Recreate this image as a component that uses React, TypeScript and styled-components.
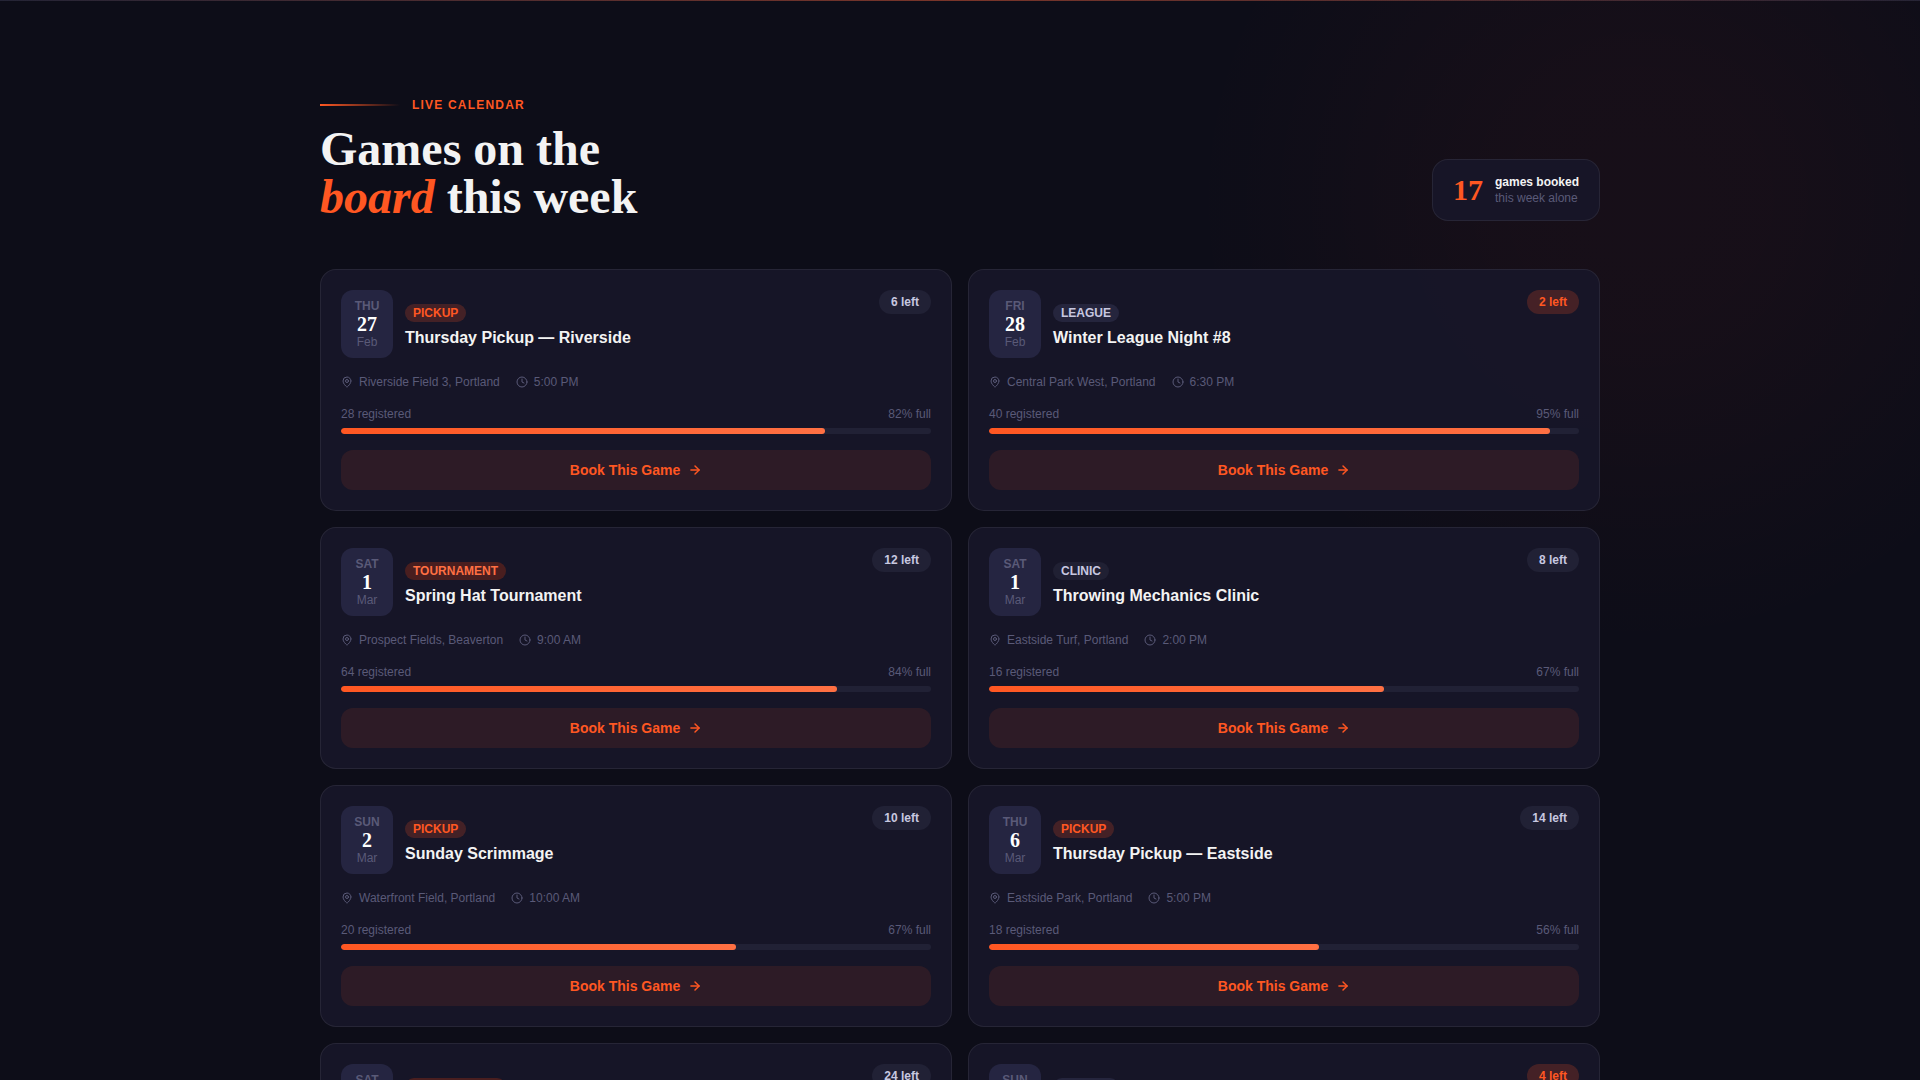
import React from "react";
import styled, { createGlobalStyle } from "styled-components";
import { ArrowRight, Clock, MapPin } from "lucide-react";

type Kind = "Pickup" | "League" | "Tournament" | "Clinic";

interface Game {
  weekday: string;
  day: number;
  month: string;
  kind: Kind;
  title: string;
  place: string;
  time: string;
  registered: number;
  left: number;
}

const games: Game[] = [
  { weekday: "Thu", day: 27, month: "Feb", kind: "Pickup", title: "Thursday Pickup — Riverside", place: "Riverside Field 3, Portland", time: "5:00 PM", registered: 28, left: 6 },
  { weekday: "Fri", day: 28, month: "Feb", kind: "League", title: "Winter League Night #8", place: "Central Park West, Portland", time: "6:30 PM", registered: 40, left: 2 },
  { weekday: "Sat", day: 1, month: "Mar", kind: "Tournament", title: "Spring Hat Tournament", place: "Prospect Fields, Beaverton", time: "9:00 AM", registered: 64, left: 12 },
  { weekday: "Sat", day: 1, month: "Mar", kind: "Clinic", title: "Throwing Mechanics Clinic", place: "Eastside Turf, Portland", time: "2:00 PM", registered: 16, left: 8 },
  { weekday: "Sun", day: 2, month: "Mar", kind: "Pickup", title: "Sunday Scrimmage", place: "Waterfront Field, Portland", time: "10:00 AM", registered: 20, left: 10 },
  { weekday: "Thu", day: 6, month: "Mar", kind: "Pickup", title: "Thursday Pickup — Eastside", place: "Eastside Park, Portland", time: "5:00 PM", registered: 18, left: 14 },
  { weekday: "Sat", day: 8, month: "Mar", kind: "Tournament", title: "Rose City Classic", place: "Delta Park, Portland", time: "9:00 AM", registered: 72, left: 24 },
  { weekday: "Sun", day: 9, month: "Mar", kind: "League", title: "Winter League Night #9", place: "Central Park West, Portland", time: "6:30 PM", registered: 38, left: 4 },
];

const sans = `"Liberation Sans", Arial, sans-serif`;
const serif = `"Liberation Serif", "Times New Roman", serif`;

const color = {
  page: "#0d0d18",
  card: "rgba(23, 22, 41, 0.9)",
  tile: "#252541",
  border: "rgba(255, 255, 255, 0.07)",
  text: "#f3f3f3",
  soft: "#c8c8e0",
  muted: "#5a5a78",
  accent: "#ff5722",
  accentSoft: "#ff7043",
};

const kindStyle: Record<Kind, { fg: string; bg: string }> = {
  Pickup: { fg: "#ff5722", bg: "rgba(255, 87, 34, 0.2)" },
  Tournament: { fg: "#ff7043", bg: "rgba(191, 54, 12, 0.3)" },
  League: { fg: color.soft, bg: "#25253d" },
  Clinic: { fg: color.soft, bg: "#202033" },
};

const GlobalStyle = createGlobalStyle`
  *, *::before, *::after { box-sizing: border-box; }
  body {
    margin: 0;
    background: ${color.page};
    color: ${color.text};
    font: 12px/16px ${sans};
  }
  h1, h2, p, ul { margin: 0; padding: 0; }
`;

const Section = styled.section`
  position: relative;
  overflow: hidden;
  min-height: 100vh;
  padding: 0 32px 96px;
`;

const TopLine = styled.div`
  height: 1px;
  margin: 0 -32px 96px;
  background: linear-gradient(90deg, #242436, #7a3529, #242436);
`;

const Glow = styled.div`
  position: absolute;
  top: -250px;
  right: -170px;
  width: 900px;
  height: 900px;
  border-radius: 50%;
  background: radial-gradient(
    circle closest-side,
    rgba(255, 60, 34, 0.045),
    rgba(255, 60, 34, 0.041) 30%,
    rgba(255, 60, 34, 0.024) 58%,
    rgba(255, 60, 34, 0.006) 84%,
    transparent
  );
  pointer-events: none;
`;

const Container = styled.div`
  position: relative;
  max-width: 1280px;
  margin: 0 auto;
`;

const Header = styled.header`
  display: flex;
  align-items: flex-end;
  justify-content: space-between;
  gap: 24px;
  margin-bottom: 48px;
`;

const Eyebrow = styled.p`
  display: flex;
  align-items: center;
  gap: 12px;
  margin-bottom: 12px;
  color: ${color.accent};
  font-weight: 700;
  letter-spacing: 0.1em;
  text-transform: uppercase;

  &::before {
    content: "";
    width: 80px;
    height: 2px;
    background: linear-gradient(90deg, ${color.accent}, transparent);
  }
`;

const Heading = styled.h1`
  font: 700 48px/48px ${serif};

  em {
    color: ${color.accent};
  }
`;

const Stat = styled.div`
  display: flex;
  align-items: center;
  gap: 12px;
  padding: 12px 20px;
  border: 1px solid ${color.border};
  border-radius: 16px;
  background: ${color.card};
`;

const StatNumber = styled.span`
  color: ${color.accent};
  font: 700 30px/36px ${serif};
`;

const StatText = styled.p`
  display: flex;
  flex-direction: column;
  color: ${color.muted};

  strong {
    color: ${color.text};
  }
`;

const Grid = styled.ul`
  display: grid;
  grid-template-columns: repeat(2, minmax(0, 1fr));
  gap: 16px;
  list-style: none;
`;

const Card = styled.li`
  display: flex;
  flex-direction: column;
  gap: 16px;
  padding: 20px;
  border: 1px solid ${color.border};
  border-radius: 16px;
  background: ${color.card};
`;

const CardTop = styled.div`
  display: flex;
  align-items: flex-start;
  justify-content: space-between;
`;

const Identity = styled.div`
  display: flex;
  align-items: center;
  gap: 12px;
`;

const DateTile = styled.time`
  display: flex;
  flex-direction: column;
  align-items: center;
  justify-content: center;
  width: 52px;
  height: 68px;
  border-radius: 12px;
  background: ${color.tile};
  color: ${color.muted};
`;

const Weekday = styled.span`
  font-weight: 700;
  text-transform: uppercase;
`;

const Day = styled.span`
  color: #ffffff;
  font: 700 20px/20px ${serif};
`;

const Names = styled.div`
  display: flex;
  flex-direction: column;
  align-items: flex-start;
  gap: 4px;
  padding-top: 6px;
`;

const Tag = styled.span<{ $kind: Kind }>`
  padding: 1px 8px;
  border-radius: 9px;
  background: ${({ $kind }) => kindStyle[$kind].bg};
  color: ${({ $kind }) => kindStyle[$kind].fg};
  font-weight: 700;
  text-transform: uppercase;
`;

const Title = styled.h2`
  font: 700 16px/24px ${sans};
`;

const Spots = styled.span<{ $low: boolean }>`
  padding: 4px 12px;
  border-radius: 12px;
  background: ${({ $low }) => ($low ? "rgba(255, 87, 34, 0.2)" : "#212135")};
  color: ${({ $low }) => ($low ? color.accent : color.soft)};
  font-weight: 700;
`;

const Meta = styled.div`
  display: flex;
  gap: 16px;
  color: ${color.muted};
`;

const MetaItem = styled.span`
  display: flex;
  align-items: center;
  gap: 6px;
`;

const Fill = styled.div`
  display: flex;
  flex-direction: column;
  gap: 6px;
  color: ${color.muted};
`;

const FillLabels = styled.div`
  display: flex;
  justify-content: space-between;
`;

const Track = styled.div`
  height: 6px;
  border-radius: 3px;
  overflow: hidden;
  background: #212135;
`;

const Bar = styled.div`
  height: 100%;
  border-radius: 3px;
  background: linear-gradient(90deg, ${color.accent}, ${color.accentSoft});
`;

const BookButton = styled.button`
  display: flex;
  align-items: center;
  justify-content: center;
  gap: 8px;
  height: 40px;
  padding: 0;
  border: 0;
  border-radius: 12px;
  background: rgba(255, 87, 34, 0.1);
  color: ${color.accent};
  font: 700 14px/20px ${sans};
  cursor: pointer;
`;

function GameCard({ game }: { game: Game }) {
  const share = (game.registered / (game.registered + game.left)) * 100;
  const percent = Math.round(share);
  return (
    <Card>
      <CardTop>
        <Identity>
          <DateTile>
            <Weekday>{game.weekday}</Weekday>
            <Day>{game.day}</Day>
            <span>{game.month}</span>
          </DateTile>
          <Names>
            <Tag $kind={game.kind}>{game.kind}</Tag>
            <Title>{game.title}</Title>
          </Names>
        </Identity>
        <Spots $low={game.left < 5}>{game.left} left</Spots>
      </CardTop>
      <Meta>
        <MetaItem>
          <MapPin size={12} aria-hidden />
          {game.place}
        </MetaItem>
        <MetaItem>
          <Clock size={12} aria-hidden />
          {game.time}
        </MetaItem>
      </Meta>
      <Fill>
        <FillLabels>
          <span>{game.registered} registered</span>
          <span>{percent}% full</span>
        </FillLabels>
        <Track role="progressbar" aria-label="Spots filled" aria-valuenow={percent}>
          <Bar style={{ width: `${percent}%` }} />
        </Track>
      </Fill>
      <BookButton type="button">
        Book This Game
        <ArrowRight size={14} strokeWidth={2.5} aria-hidden />
      </BookButton>
    </Card>
  );
}

export default function App() {
  return (
    <>
      <GlobalStyle />
      <Section>
        <TopLine />
        <Glow />
        <Container>
          <Header>
            <div>
              <Eyebrow>Live Calendar</Eyebrow>
              <Heading>
                Games on the
                <br />
                <em>board</em> this week
              </Heading>
            </div>
            <Stat>
              <StatNumber>17</StatNumber>
              <StatText>
                <strong>games booked</strong>
                <span>this week alone</span>
              </StatText>
            </Stat>
          </Header>
          <Grid>
            {games.map((game) => (
              <GameCard key={`${game.month}-${game.day}-${game.title}`} game={game} />
            ))}
          </Grid>
        </Container>
      </Section>
    </>
  );
}
